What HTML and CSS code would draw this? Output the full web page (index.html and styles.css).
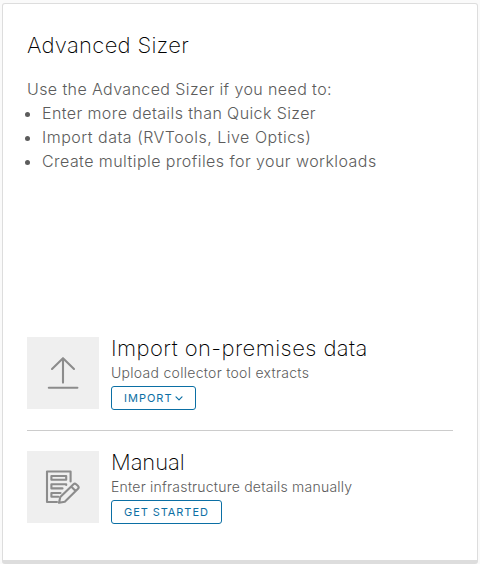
FILE: index.html
```html
<!DOCTYPE html>
<html lang="en">
<head>
  <meta charset="UTF-8" />
  <meta name="viewport" content="width=device-width, initial-scale=1" />
  <title>Advanced Sizer</title>
  <link rel="stylesheet" href="styles.css">
</head>
<body>
  <div class="card">
    <h1>Advanced Sizer</h1>
    <div class="intro">
      <p>Use the Advanced Sizer if you need to:</p>
      <ul>
        <li>Enter more details than Quick Sizer</li>
        <li class="import-data">Import data (RVTools, Live Optics)</li>
        <li class="profiles">Create multiple profiles for your workloads</li>
      </ul>
    </div>

    <div class="option import">
      <div class="icon">
        <svg width="36" height="36" viewBox="0 0 36 36">
          <path d="M18 27.6V3.4M7 14L18 3.2L29 14M3.8 32.8H32.4" />
        </svg>
      </div>
      <div class="content">
        <h2>Import on-premises data</h2>
        <p>Upload collector tool extracts</p>
        <button>IMPORT
          <svg class="caret" width="8" height="5" viewBox="0 0 8 5"><path d="M1 .8L4 3.8L7 .8" /></svg>
        </button>
      </div>
    </div>

    <div class="option manual">
      <div class="icon">
        <svg width="36" height="36" viewBox="0 0 36 36">
          <path d="M25.6 12.5V2.5H2V33H12M6.4 7H21.2V10.8H6.4ZM17.5 19.4H6.4V15.2H21.2V16M13.5 27.8H6.4V24H15.5" />
          <path d="M14 33.8L15.3 28L28.5 15.2Q29.8 14 31.1 15.2L33.1 17.1Q34.3 18.4 33 19.7L19.8 32.7ZM26.2 17.6L30.6 22" />
        </svg>
      </div>
      <div class="content">
        <h2>Manual</h2>
        <p>Enter infrastructure details manually</p>
        <button>GET STARTED</button>
      </div>
    </div>
  </div>
</body>
</html>
```
FILE: styles.css
```css
body {
  font-family: Inter, "Liberation Sans", sans-serif;
  font-weight: 300;
  background-color: #fafafa;
  margin: 0;
}

.card {
  box-sizing: border-box;
  width: 476px;
  height: 561px;
  margin: 3px 2px 0;
  padding: 29px 24px 0;
  background: white;
  border: 1px solid #ddd;
  border-bottom-width: 4px;
  border-radius: 3px;
}

h1, h2, p, ul {
  margin: 0;
}

h1, h2 {
  font-size: 22px;
  font-weight: 200;
  line-height: 24px;
  color: #000;
}

h1 {
  letter-spacing: 0.3px;
}

h2 {
  margin-top: -1px;
  letter-spacing: 0.43px;
}

.intro {
  height: 260px;
  margin-top: 20px;
  font-size: 16px;
  line-height: 24px;
  letter-spacing: 0.4px;
  color: #5c5c5c;
}

ul {
  padding-left: 15px;
}

.import-data {
  letter-spacing: 0.5px;
}

.profiles {
  letter-spacing: 0.44px;
}

.option {
  display: flex;
  gap: 12px;
  height: 72px;
}

.icon {
  display: flex;
  align-items: center;
  justify-content: center;
  width: 72px;
  height: 72px;
  background: #efefef;
}

svg {
  fill: none;
  stroke: #8c8c8c;
  stroke-width: 2.1;
  stroke-linecap: round;
  stroke-linejoin: round;
}

.content p {
  margin-bottom: 1px;
  padding-top: 1px;
  font-size: 14px;
  line-height: 24px;
  letter-spacing: 0.28px;
  color: #5c5c5c;
}

.manual .content p {
  letter-spacing: 0.22px;
}

button {
  display: flex;
  align-items: center;
  gap: 2px;
  box-sizing: border-box;
  height: 24px;
  padding: 0 12px;
  font-family: inherit;
  font-size: 11px;
  font-weight: 400;
  letter-spacing: 1px;
  color: #0b6fa4;
  background: white;
  border: 1px solid #0b6fa4;
  border-radius: 3px;
}

.caret {
  stroke: #0b6fa4;
  stroke-width: 1.2;
}

.manual {
  margin-top: 21px;
  padding-top: 20px;
  border-top: 1px solid #ccc;
}

.manual h2 {
  letter-spacing: -0.1px;
}

.manual button {
  letter-spacing: 0.93px;
}
```
